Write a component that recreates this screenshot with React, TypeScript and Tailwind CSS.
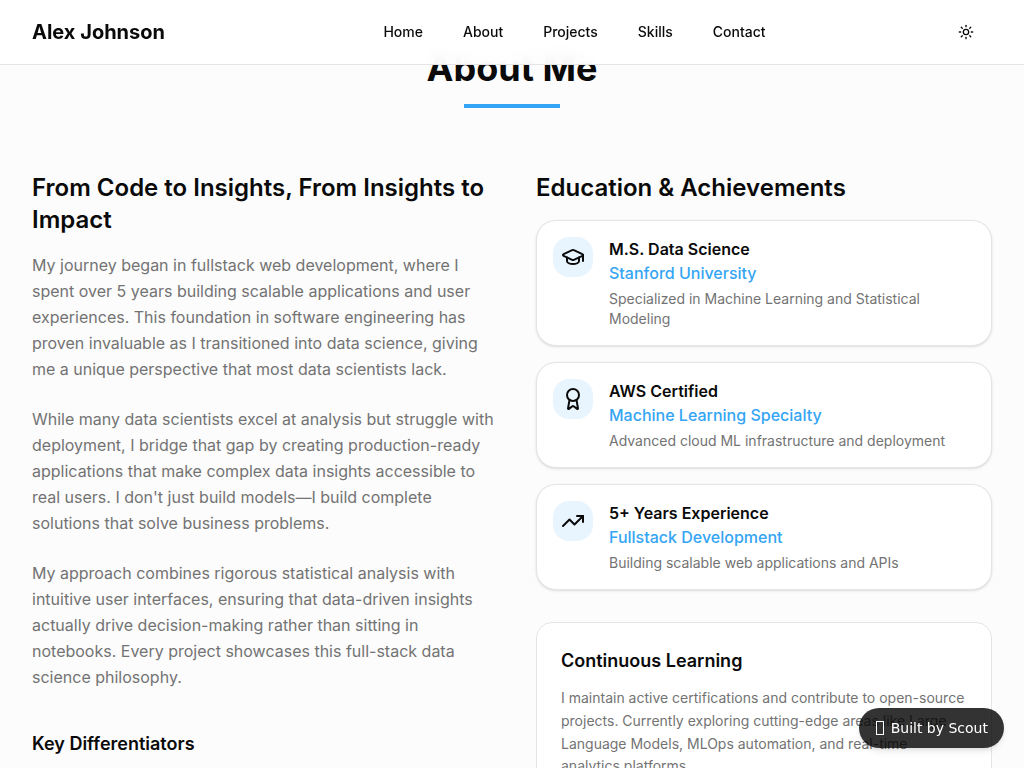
import React from "react";
import { Award, GraduationCap, Sun, TrendingUp } from "lucide-react";
import type { LucideIcon } from "lucide-react";

const links = ["Home", "About", "Projects", "Skills", "Contact"];

const story = [
  "My journey began in fullstack web development, where I spent over 5 years building scalable applications and user experiences. This foundation in software engineering has proven invaluable as I transitioned into data science, giving me a unique perspective that most data scientists lack.",
  "While many data scientists excel at analysis but struggle with deployment, I bridge that gap by creating production-ready applications that make complex data insights accessible to real users. I don't just build models—I build complete solutions that solve business problems.",
  "My approach combines rigorous statistical analysis with intuitive user interfaces, ensuring that data-driven insights actually drive decision-making rather than sitting in notebooks. Every project showcases this full-stack data science philosophy.",
];

type Achievement = {
  icon: LucideIcon;
  title: string;
  subtitle: string;
  detail: string;
};

const achievements: Achievement[] = [
  {
    icon: GraduationCap,
    title: "M.S. Data Science",
    subtitle: "Stanford University",
    detail: "Specialized in Machine Learning and Statistical Modeling",
  },
  {
    icon: Award,
    title: "AWS Certified",
    subtitle: "Machine Learning Specialty",
    detail: "Advanced cloud ML infrastructure and deployment",
  },
  {
    icon: TrendingUp,
    title: "5+ Years Experience",
    subtitle: "Fullstack Development",
    detail: "Building scalable web applications and APIs",
  },
];

function Header() {
  return (
    <header className="fixed inset-x-0 top-0 z-40 border-b border-[#e5e5e5] bg-white/95 backdrop-blur-sm">
      <div className="mx-auto flex h-16 max-w-7xl items-center px-8">
        <a href="#home" className="text-xl font-bold">
          Alex Johnson
        </a>
        <nav className="flex flex-1 justify-center gap-10 pl-9 text-sm font-medium">
          {links.map((label) => (
            <a key={label} href={`#${label.toLowerCase()}`}>
              {label}
            </a>
          ))}
        </nav>
        <button
          type="button"
          aria-label="Toggle theme"
          className="mr-2 flex size-9 items-center justify-center rounded-xl"
        >
          <Sun className="size-4" />
        </button>
      </div>
    </header>
  );
}

function AchievementCard({ icon: Icon, title, subtitle, detail }: Achievement) {
  return (
    <article className="flex items-start gap-4 rounded-[20px] border border-[#e5e5e5] bg-white p-4 shadow-sm">
      <div className="flex size-10 shrink-0 items-center justify-center rounded-2xl bg-[#e9f5fe]">
        <Icon className="size-6" />
      </div>
      <div>
        <h4 className="font-semibold">{title}</h4>
        <p className="font-medium text-[#34a5f4]">{subtitle}</p>
        <p className="mt-1 text-sm text-[#737373]">{detail}</p>
      </div>
    </article>
  );
}

export default function App() {
  return (
    <div className="h-screen overflow-hidden bg-[#fcfcfc] font-['Inter',sans-serif] text-[#0a0a0a] antialiased">
      <Header />
      <main id="about" className="mx-auto max-w-7xl px-8 pt-12">
        <div className="mb-16 flex flex-col items-center gap-4">
          <h2 className="text-4xl font-bold">About Me</h2>
          <div className="h-1 w-24 bg-[#34a5f4]" />
        </div>
        <div className="grid grid-cols-2 gap-12">
          <section>
            <h3 className="mb-4 text-2xl font-semibold">
              From Code to Insights, From Insights to Impact
            </h3>
            <div className="-mr-2 space-y-6 leading-relaxed text-[#737373]">
              {story.map((text) => (
                <p key={text}>{text}</p>
              ))}
            </div>
            <h4 className="mt-10 text-lg font-semibold">Key Differentiators</h4>
          </section>
          <section>
            <h3 className="mb-4 text-2xl font-semibold">Education &amp; Achievements</h3>
            <div className="space-y-4">
              {achievements.map((item) => (
                <AchievementCard key={item.title} {...item} />
              ))}
            </div>
            <div className="mt-8 rounded-2xl border border-[#e5e5e5] bg-white p-6">
              <h4 className="mb-3 text-lg font-semibold">Continuous Learning</h4>
              <p className="text-sm leading-relaxed text-[#737373]">
                I maintain active certifications and contribute to open-source projects. Currently
                exploring cutting-edge areas like Large Language Models, MLOps automation, and
                real-time analytics platforms.
              </p>
            </div>
          </section>
        </div>
      </main>
      <a
        href="#scout"
        className="fixed right-5 bottom-5 z-50 flex h-10 items-center gap-[7px] rounded-full bg-black/80 pr-4 pl-[17px] font-['DejaVu_Sans',sans-serif] text-sm text-white shadow-md"
      >
        <span aria-hidden="true" className="h-3.5 w-2 border border-white" />
        Built by Scout
      </a>
    </div>
  );
}
